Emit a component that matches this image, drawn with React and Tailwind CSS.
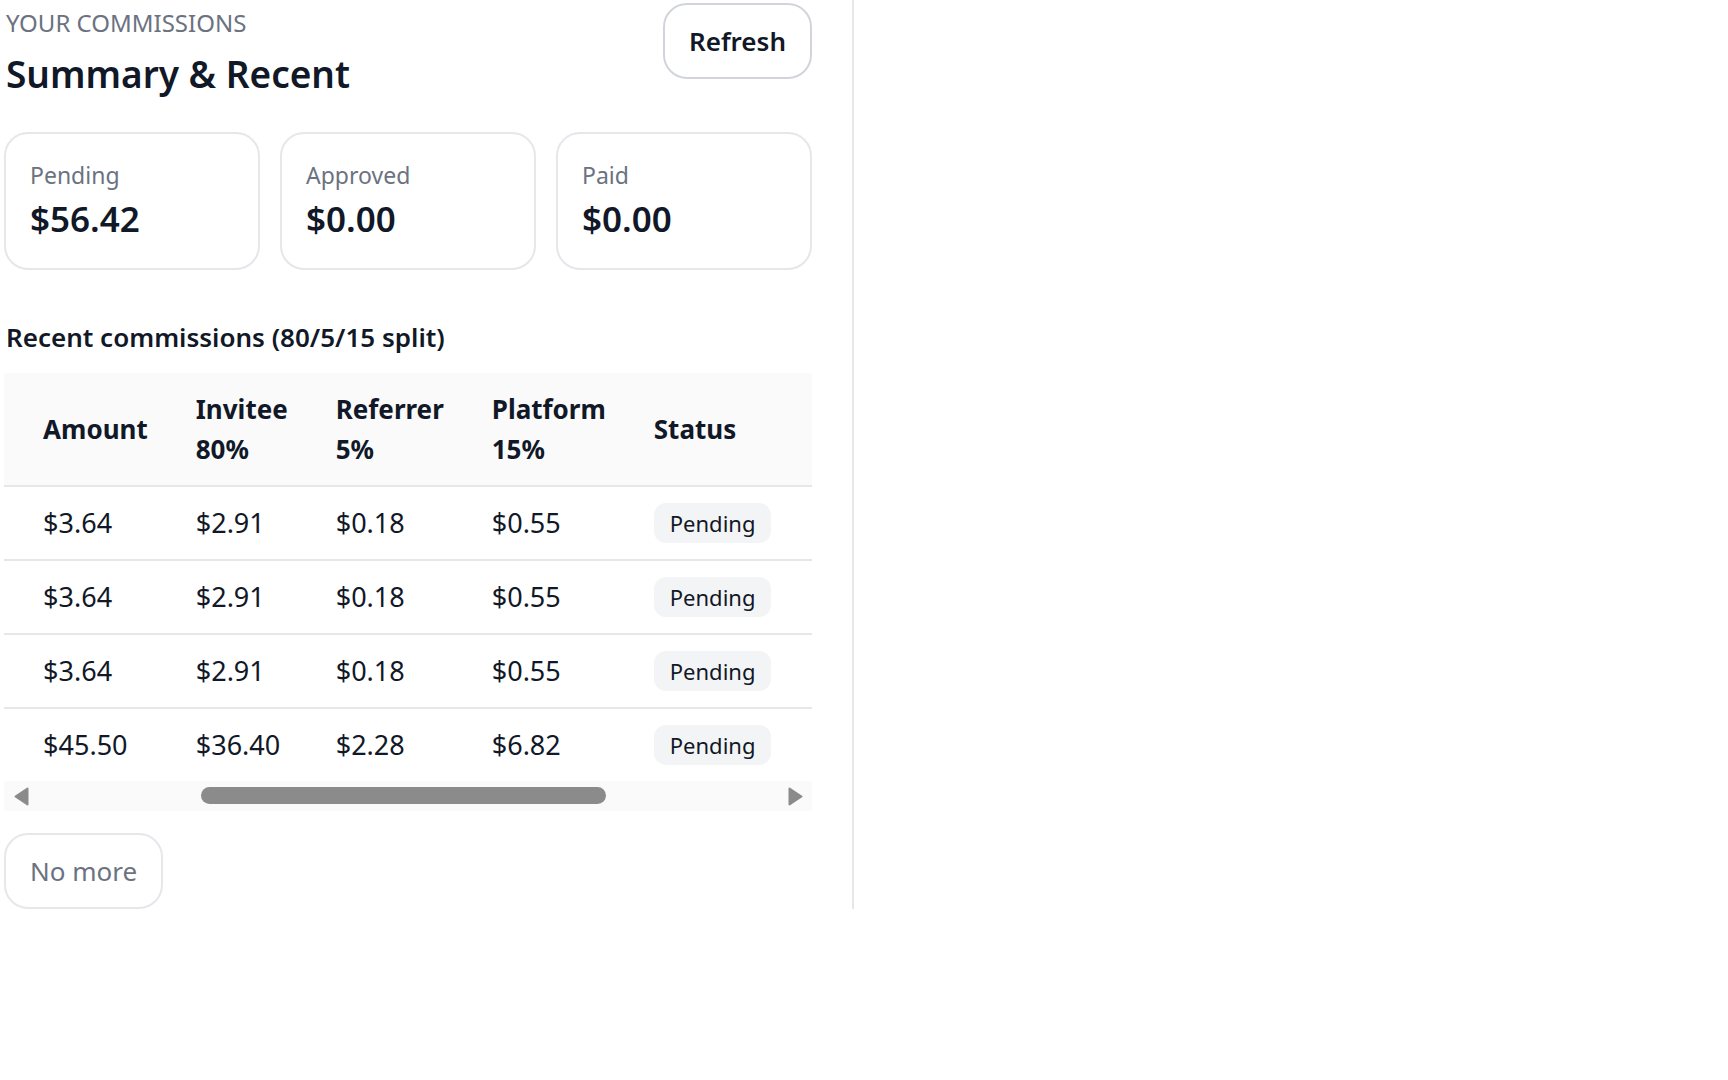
import React, { useEffect, useRef, useState } from 'react';

/* ── Summary totals ───────────────────────────────── */
const SUMMARY = [
  { label: 'Pending',  value: '$56.42' },
  { label: 'Approved', value: '$0.00' },
  { label: 'Paid',     value: '$0.00' },
];

/* ── Recent commission rows ───────────────────────── */
const ROWS = [
  { date: '2025-06-14', order: '#104213', amount: '$3.64',  invitee: '$2.91',  referrer: '$0.18', platform: '$0.55', status: 'Pending', buyer: 'user_4821', updated: '2025-06-14' },
  { date: '2025-06-14', order: '#104187', amount: '$3.64',  invitee: '$2.91',  referrer: '$0.18', platform: '$0.55', status: 'Pending', buyer: 'user_4821', updated: '2025-06-14' },
  { date: '2025-06-13', order: '#104022', amount: '$3.64',  invitee: '$2.91',  referrer: '$0.18', platform: '$0.55', status: 'Pending', buyer: 'user_3390', updated: '2025-06-13' },
  { date: '2025-06-12', order: '#103771', amount: '$45.50', invitee: '$36.40', referrer: '$2.28', platform: '$6.82', status: 'Pending', buyer: 'user_1204', updated: '2025-06-12' },
];

/* ── Horizontal scroll track under the table ──────── */
function ScrollTrack({ thumb }) {
  return (
    <div className="flex h-[30px] bg-[#fafafa]">
      <div className="flex w-[30px] flex-shrink-0 items-center justify-end pr-[5px]">
        <svg width="15" height="19" viewBox="0 0 15 19">
          <path d="M13.5 1.5 L1.5 9.5 L13.5 17.5 Z" fill="#8b8b8b" stroke="#8b8b8b" strokeWidth="2" strokeLinejoin="round" />
        </svg>
      </div>
      <div className="relative flex-1">
        <div
          className="absolute top-[6px] h-[17px] rounded-full bg-[#8b8b8b]"
          style={{ left: thumb.left, width: thumb.width }}
        />
      </div>
      <div className="flex w-[30px] flex-shrink-0 items-center justify-start pl-[6px]">
        <svg width="15" height="19" viewBox="0 0 15 19">
          <path d="M1.5 1.5 L13.5 9.5 L1.5 17.5 Z" fill="#8b8b8b" stroke="#8b8b8b" strokeWidth="2" strokeLinejoin="round" />
        </svg>
      </div>
    </div>
  );
}

export default function App() {
  const scrollRef = useRef(null);
  const amountRef = useRef(null);
  const [thumb, setThumb] = useState({ left: 0, width: 0 });

  const syncThumb = () => {
    const el = scrollRef.current;
    if (!el) return;
    const track = el.clientWidth - 60;
    setThumb({
      left: (el.scrollLeft / el.scrollWidth) * track,
      width: (el.clientWidth / el.scrollWidth) * track,
    });
  };

  // open the table scrolled to the split columns
  useEffect(() => {
    if (scrollRef.current && amountRef.current) {
      scrollRef.current.scrollLeft = amountRef.current.offsetLeft - 15;
    }
    syncThumb();
  }, []);

  const th = 'px-6 py-4 align-middle';
  const td = 'px-6 py-4 align-middle whitespace-nowrap';

  return (
    <div className="min-h-screen bg-white font-['Noto_Sans',sans-serif] text-[#111827]">
      <div className="w-[854px] border-r-2 border-[#e5e7eb] pl-1 pr-10 pt-[3px]">
        {/* Header */}
        <div className="flex items-start justify-between">
          <div className="pl-0.5">
            <p className="text-2xl leading-10 text-[#6b7280] uppercase">Your commissions</p>
            <h2 className="mt-[3px] text-[37px] leading-[56px] font-semibold">Summary &amp; Recent</h2>
          </div>
          <button className="rounded-3xl border-2 border-[#d1d5db] bg-white px-6 py-4 text-[26px] leading-10 font-semibold">
            Refresh
          </button>
        </div>

        {/* Totals */}
        <div className="mt-[30px] grid grid-cols-3 gap-5">
          {SUMMARY.map((s) => (
            <div key={s.label} className="rounded-3xl border-2 border-[#e5e7eb] px-6 pt-[25px] pb-[21px]">
              <p className="text-[23px] leading-8 text-[#6b7280]">{s.label}</p>
              <p className="text-[35px] leading-[56px] font-semibold">{s.value}</p>
            </div>
          ))}
        </div>

        {/* Recent table */}
        <h3 className="mt-[47px] pl-0.5 text-[26px] leading-10 font-semibold">Recent commissions (80/5/15 split)</h3>
        <div className="mt-4">
          <div
            ref={scrollRef}
            onScroll={syncThumb}
            className="overflow-x-auto [scrollbar-width:none]"
          >
            <table className="w-full text-[27px] leading-10">
              <thead className="bg-[#fafafa] border-b-2 border-[#e5e7eb]">
                <tr className="text-left text-[26px] font-bold">
                  <th className={th}>Date</th>
                  <th className={th}>Order</th>
                  <th ref={amountRef} className={th}>Amount</th>
                  <th className={th}>Invitee 80%</th>
                  <th className={th}>Referrer 5%</th>
                  <th className={th}>Platform 15%</th>
                  <th className={th}>Status</th>
                  <th className={th}>Buyer</th>
                  <th className={th}>Updated</th>
                </tr>
              </thead>
              <tbody className="divide-y-2 divide-[#e5e7eb]">
                {ROWS.map((r, i) => (
                  <tr key={i}>
                    <td className={td}>{r.date}</td>
                    <td className={td}>{r.order}</td>
                    <td className={td}>{r.amount}</td>
                    <td className={td}>{r.invitee}</td>
                    <td className={td}>{r.referrer}</td>
                    <td className={td}>{r.platform}</td>
                    <td className={td}>
                      <span className="block w-fit rounded-xl bg-[#f3f4f6] px-4 py-1 text-[22px] leading-8">{r.status}</span>
                    </td>
                    <td className={td}>{r.buyer}</td>
                    <td className={td}>{r.updated}</td>
                  </tr>
                ))}
              </tbody>
            </table>
          </div>
          <ScrollTrack thumb={thumb} />
        </div>

        <button className="mt-[22px] rounded-3xl border-2 border-[#e5e7eb] bg-white px-6 py-4 text-[26px] leading-10 text-[#6b7280]">
          No more
        </button>
      </div>
    </div>
  );
}
